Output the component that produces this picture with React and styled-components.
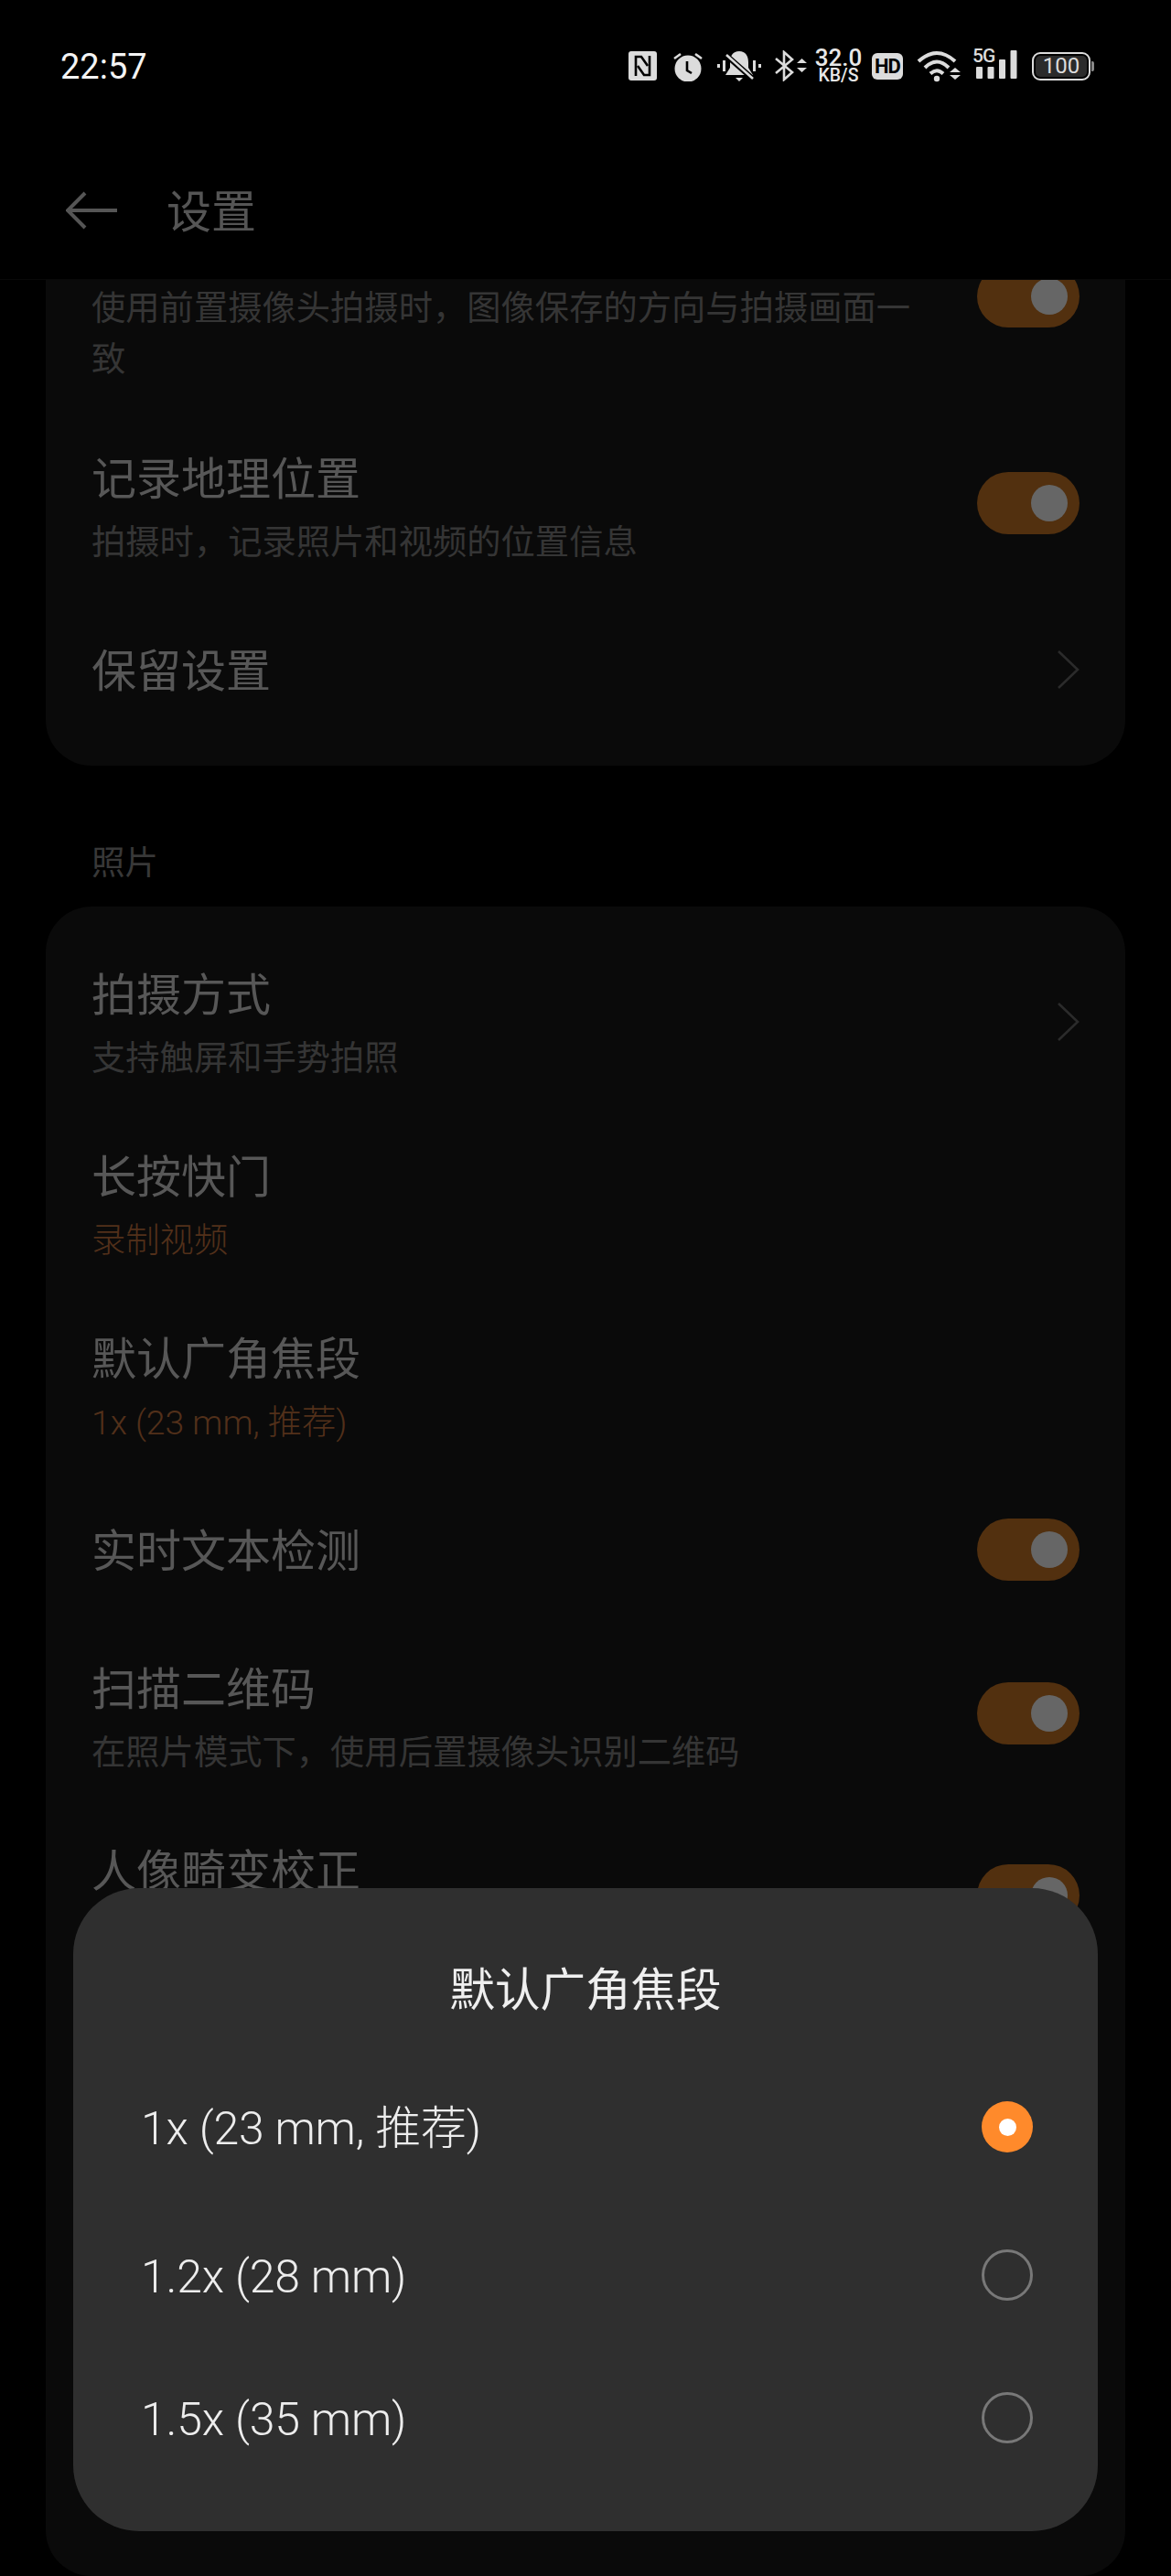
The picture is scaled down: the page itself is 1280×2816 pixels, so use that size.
import React from "react";
import styled, { createGlobalStyle } from "styled-components";

const CJK = `Roboto, "Noto Sans CJK SC", sans-serif`;

const GlobalStyle = createGlobalStyle`
  html, body {
    margin: 0;
    padding: 0;
    background: #000;
  }
  * {
    box-sizing: border-box;
  }
`;

const Phone = styled.div`
  position: relative;
  display: flex;
  flex-direction: column;
  width: 1280px;
  height: 2816px;
  overflow: hidden;
  background: #000;
  font-family: ${CJK};
`;

const StatusBar = styled.div`
  display: flex;
  align-items: center;
  justify-content: space-between;
  height: 144px;
  padding: 0 84px 0 66px;
  flex-shrink: 0;
`;

const Clock = styled.div`
  margin-top: 2px;
  font-size: 38px;
  color: #f4f4f4;
`;

const StatusIcons = styled.div`
  display: flex;
  align-items: center;
  color: #dcdcdc;
`;

const StatusSvg = styled.svg`
  display: block;
  margin-left: ${(props) => props.$gap || 0}px;
  margin-bottom: ${(props) => props.$lift || 0}px;
  flex-shrink: 0;
`;

const Speed = styled.div`
  display: flex;
  flex-direction: column;
  align-items: center;
  width: 51px;
  margin-left: 9px;
  font-weight: 500;
  color: #e8e8e8;
`;

const SpeedValue = styled.span`
  font-size: 26px;
  line-height: 22px;
`;

const SpeedUnit = styled.span`
  font-size: 19.500px;
  line-height: 18px;
`;

const HdBadge = styled.div`
  display: flex;
  align-items: center;
  justify-content: center;
  width: 34px;
  height: 29px;
  margin-left: 11px;
  border-radius: 6px;
  background: #dcdcdc;
  color: #000;
  font-size: 22px;
  font-weight: 700;
  letter-spacing: -1px;
`;

const Battery = styled.div`
  display: flex;
  align-items: center;
  margin-left: 16px;
`;

const BatteryBody = styled.div`
  width: 64px;
  height: 31px;
  padding: 2px;
  border: 2px solid #dcdcdc;
  border-radius: 9px;
`;

const BatteryLevel = styled.div`
  display: flex;
  align-items: center;
  justify-content: center;
  height: 100%;
  border-radius: 5px;
  background: #2b2b2b;
  color: #dcdcdc;
  font-size: 24px;
`;

const BatteryTip = styled.div`
  width: 3px;
  height: 11px;
  margin-left: 1px;
  border-radius: 0 2px 2px 0;
  background: #888;
`;

const NavBar = styled.div`
  display: flex;
  align-items: center;
  height: 162px;
  padding: 10px 0 0 72px;
  border-bottom: 1px solid #090909;
  flex-shrink: 0;
`;

const BackIcon = styled.svg`
  display: block;
`;

const NavTitle = styled.div`
  margin: 0 0 5px 54px;
  font-size: 49px;
  color: #555;
`;

const Scroller = styled.div`
  display: flex;
  flex-direction: column;
  flex: 1;
  min-height: 0;
  padding: 0 50px;
  overflow: hidden;
`;

const Card = styled.div`
  display: flex;
  flex-direction: column;
  flex: ${(props) => (props.$fill ? 1 : "none")};
  margin-top: ${(props) => props.$offset || 0}px;
  padding: ${(props) => props.$pad};
  border-radius: 50px;
  background: #0a0a0a;
`;

const SectionLabel = styled.div`
  padding: 79px 0 19px 50px;
  font-size: 36.500px;
  line-height: 56px;
  color: #383838;
`;

const Row = styled.div`
  display: flex;
  align-items: center;
  justify-content: space-between;
  min-height: ${(props) => props.$min || 0}px;
  padding: ${(props) => props.$pad || "34px 50px 35px"};
`;

const RowText = styled.div`
  align-self: flex-start;
  max-width: 925px;
`;

const RowTitle = styled.div`
  font-size: 49px;
  line-height: 68px;
  color: #575757;
`;

const RowSub = styled.div`
  margin-top: ${(props) => (props.$flush ? 0 : 6)}px;
  font-size: 37.300px;
  font-weight: ${(props) => (props.$accent ? 300 : 400)};
  line-height: 56px;
  color: ${(props) => (props.$accent ? "#52301a" : "#353535")};
`;

const Toggle = styled.div`
  display: flex;
  align-items: center;
  justify-content: flex-end;
  width: 112px;
  height: 68px;
  padding-right: 13px;
  border-radius: 34px;
  background: #52300f;
  transform: translateY(${(props) => -(props.$lift ?? 6)}px);
  flex-shrink: 0;
`;

const Knob = styled.div`
  width: 40px;
  height: 40px;
  border-radius: 50%;
  background: #666;
`;

const Chevron = styled.svg`
  display: block;
  margin-bottom: 7px;
  flex-shrink: 0;
`;

const Dialog = styled.div`
  position: absolute;
  left: 80px;
  top: 2064px;
  width: 1120px;
  padding: 78px 0 46px;
  border-radius: 72px;
  background: #2f2f2f;
`;

const DialogTitle = styled.div`
  margin-bottom: 37px;
  font-size: 49.500px;
  line-height: 68px;
  text-align: center;
  color: #efefef;
`;

const Option = styled.div`
  display: flex;
  align-items: center;
  justify-content: space-between;
  height: 156px;
  margin-top: ${(props) => props.$offset || 0}px;
  padding: 0 71px 0 74px;
`;

const OptionLabel = styled.div`
  padding-top: 4px;
  font-size: 50px;
  font-weight: 300;
  line-height: 60px;
  letter-spacing: -0.200px;
  color: #ededed;
`;

const Radio = styled.div`
  display: flex;
  align-items: center;
  justify-content: center;
  width: 56px;
  height: 56px;
  border-radius: 50%;
  border: ${(props) => (props.$on ? "none" : "3px solid #787878")};
  background: ${(props) => (props.$on ? "#ff8a2b" : "transparent")};

  &::after {
    content: "";
    display: ${(props) => (props.$on ? "block" : "none")};
    width: 19px;
    height: 19px;
    border-radius: 50%;
    background: #fff;
  }
`;

const OPTIONS = [
  { label: "1x (23 mm, 推荐)", on: true, offset: 0 },
  { label: "1.2x (28 mm)", on: false, offset: 6 },
  { label: "1.5x (35 mm)", on: false, offset: 0 },
];

function NfcIcon() {
  return (
    <StatusSvg width="31" height="32" viewBox="0 0 31 32">
      <rect width="31" height="32" rx="3" fill="currentColor" />
      <path d="M8 27V6h6l7 10" fill="none" stroke="#000" strokeWidth="2.6" />
      <path d="M23 5v21h-6l-7-10" fill="none" stroke="#000" strokeWidth="2.6" />
    </StatusSvg>
  );
}

function AlarmIcon() {
  return (
    <StatusSvg $gap={18} width="32" height="34" viewBox="0 0 32 34">
      <circle cx="16" cy="20" r="14.5" fill="currentColor" />
      <path d="M1 9l7-5M24 4l7 5" stroke="currentColor" strokeWidth="2.6" />
      <path d="M15 12v10l5 3" fill="none" stroke="#000" strokeWidth="2.6" />
    </StatusSvg>
  );
}

function MuteIcon() {
  return (
    <StatusSvg $gap={15} width="50" height="34" viewBox="0 0 50 34">
      <path
        d="M25 1c-7 0-10 5-10 12v6l-5 8h30l-5-8v-6c0-7-3-12-10-12z"
        fill="currentColor"
      />
      <path d="M21 30h8l-4 4z" fill="currentColor" />
      <path d="M8 3l34 30" stroke="#000" strokeWidth="6" />
      <path d="M11 5l29 26" stroke="currentColor" strokeWidth="2.6" />
      <path
        d="M1 15h3v4H1zM7 11h3v12H7zM40 11h3v12h-3zM46 15h3v4h-3z"
        fill="currentColor"
      />
    </StatusSvg>
  );
}

function BluetoothIcon() {
  return (
    <StatusSvg $gap={13} width="36" height="34" viewBox="0 0 36 34">
      <path
        d="M2 9l18 15-9 8V2l9 8L2 25"
        fill="none"
        stroke="currentColor"
        strokeWidth="2.6"
      />
      <path d="M25 14l5.500-5 5.500 5zM25 19h11l-5.500 5z" fill="currentColor" />
    </StatusSvg>
  );
}

function WifiIcon() {
  return (
    <StatusSvg $gap={15} width="48" height="35" viewBox="0 0 48 35">
      <g fill="none" stroke="currentColor" strokeWidth="4">
        <path d="M2 12Q22-6 42 12" />
        <path d="M9 19Q22 6 35 19" />
        <path d="M15 25.500Q22 19 29 25.500" />
      </g>
      <circle cx="22" cy="31" r="3.200" fill="currentColor" />
      <path d="M36 24l6-5 6 5zM36 27h12l-6 5z" fill="currentColor" />
    </StatusSvg>
  );
}

function SignalIcon() {
  return (
    <StatusSvg $gap={13} $lift={9} width="49" height="39" viewBox="0 -4 49 39">
      <text
        x="0"
        y="16"
        fontFamily="Roboto, sans-serif"
        fontSize="21"
        fontWeight="500"
        letterSpacing="-1"
        fill="currentColor"
      >
        5G
      </text>
      <rect x="4" y="21" width="7" height="13" rx="1" fill="currentColor" />
      <rect x="16.500" y="21" width="7" height="13" rx="1" fill="currentColor" />
      <rect x="29" y="13" width="7" height="21" rx="1" fill="currentColor" />
      <rect x="41.500" y="3" width="7" height="31" rx="1" fill="currentColor" />
    </StatusSvg>
  );
}

function BackArrow() {
  return (
    <BackIcon width="56" height="42" viewBox="0 0 56 42">
      <path
        d="M56 21H3M21 2L2 21l19 19"
        fill="none"
        stroke="#555"
        strokeWidth="4"
      />
    </BackIcon>
  );
}

function ChevronRight() {
  return (
    <Chevron width="24" height="42" viewBox="0 0 24 42">
      <path d="M1 1l21 20L1 41" fill="none" stroke="#2b2b2b" strokeWidth="2.600" />
    </Chevron>
  );
}

function Switch({ lift }) {
  return (
    <Toggle $lift={lift}>
      <Knob />
    </Toggle>
  );
}

export default function App() {
  return (
    <Phone>
      <GlobalStyle />
      <StatusBar>
        <Clock>22:57</Clock>
        <StatusIcons>
          <NfcIcon />
          <AlarmIcon />
          <MuteIcon />
          <BluetoothIcon />
          <Speed>
            <SpeedValue>32.0</SpeedValue>
            <SpeedUnit>KB/S</SpeedUnit>
          </Speed>
          <HdBadge>HD</HdBadge>
          <WifiIcon />
          <SignalIcon />
          <Battery>
            <BatteryBody>
              <BatteryLevel>100</BatteryLevel>
            </BatteryBody>
            <BatteryTip />
          </Battery>
        </StatusIcons>
      </StatusBar>

      <NavBar>
        <BackArrow />
        <NavTitle>设置</NavTitle>
      </NavBar>

      <Scroller>
        <Card $offset={-71} $pad="0 0 20px">
          <Row $pad="74px 50px 36px">
            <RowText>
              <RowSub $flush>使用前置摄像头拍摄时，图像保存的方向与拍摄画面一致</RowSub>
            </RowText>
            <Switch lift={41} />
          </Row>
          <Row>
            <RowText>
              <RowTitle>记录地理位置</RowTitle>
              <RowSub>拍摄时，记录照片和视频的位置信息</RowSub>
            </RowText>
            <Switch />
          </Row>
          <Row $pad="45px 50px 48px">
            <RowText>
              <RowTitle>保留设置</RowTitle>
            </RowText>
            <ChevronRight />
          </Row>
        </Card>

        <SectionLabel>照片</SectionLabel>

        <Card $fill $pad="30px 0 0">
          <Row>
            <RowText>
              <RowTitle>拍摄方式</RowTitle>
              <RowSub>支持触屏和手势拍照</RowSub>
            </RowText>
            <ChevronRight />
          </Row>
          <Row>
            <RowText>
              <RowTitle>长按快门</RowTitle>
              <RowSub $accent>录制视频</RowSub>
            </RowText>
          </Row>
          <Row>
            <RowText>
              <RowTitle>默认广角焦段</RowTitle>
              <RowSub $accent>1x (23 mm, 推荐)</RowSub>
            </RowText>
          </Row>
          <Row $pad="45px 50px 49px">
            <RowText>
              <RowTitle>实时文本检测</RowTitle>
            </RowText>
            <Switch lift={3} />
          </Row>
          <Row>
            <RowText>
              <RowTitle>扫描二维码</RowTitle>
              <RowSub>在照片模式下，使用后置摄像头识别二维码</RowSub>
            </RowText>
            <Switch />
          </Row>
          <Row $min={199}>
            <RowText>
              <RowTitle>人像畸变校正</RowTitle>
            </RowText>
            <Switch />
          </Row>
        </Card>
      </Scroller>

      <Dialog>
        <DialogTitle>默认广角焦段</DialogTitle>
        {OPTIONS.map((option) => (
          <Option key={option.label} $offset={option.offset}>
            <OptionLabel>{option.label}</OptionLabel>
            <Radio $on={option.on} />
          </Option>
        ))}
      </Dialog>
    </Phone>
  );
}
